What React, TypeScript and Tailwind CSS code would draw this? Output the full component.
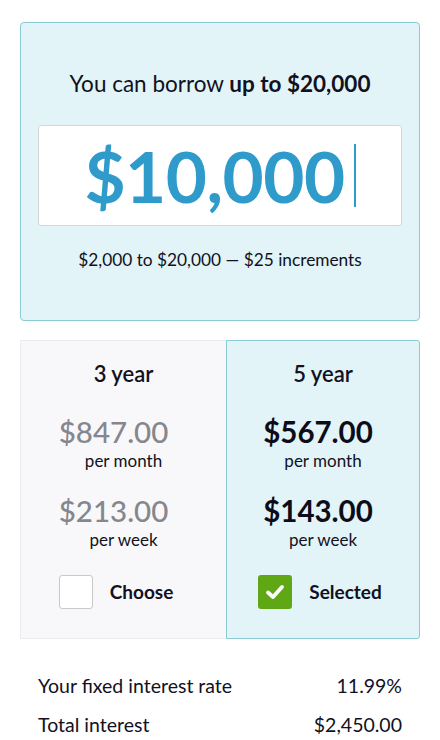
import React from "react";

const font = { fontFamily: "Lato, 'Open Sans', sans-serif" };

function Option({
  years,
  monthly,
  weekly,
  selected,
}: {
  years: string;
  monthly: string;
  weekly: string;
  selected?: boolean;
}) {
  const amount =
    "text-[29.5px] leading-[36px] " +
    (selected ? "font-bold text-[#0d0d1a] mr-[10px]" : "font-medium text-[#86868c] mr-[20px]");
  return (
    <div
      className={
        selected
          ? "flex-1 flex flex-col items-center bg-[#e2f4f7] border border-[#8ccbd3] rounded-r-[3px] pt-[18px] pb-[29px]"
          : "w-[206px] flex flex-col items-center bg-[#f8f8fa] border border-r-0 border-[#ececef] pt-[18px] pb-[29px]"
      }
    >
      <div className="text-[22px] font-semibold text-[#111122] leading-[30px]">{years}</div>
      <div className={"mt-[25px] " + amount}>{monthly}</div>
      <div className="text-[17px] text-[#111122] leading-[20px] mt-[1px]">per month</div>
      <div className={"mt-[22px] " + amount}>{weekly}</div>
      <div className="text-[17px] text-[#111122] leading-[20px] mt-[1px]">per week</div>
      <div
        className={
          "mt-[25px] flex items-center gap-[17px] " + (selected ? "mr-[6px]" : "mr-[15px]")
        }
      >
        {selected ? (
          <div className="w-[34px] h-[34px] rounded-[3px] bg-[#5fa714] flex items-center justify-center">
            <svg width="22" height="22" viewBox="0 0 22 22">
              <path
                d="M4 11.5 L9 16 L18 6"
                fill="none"
                stroke="white"
                strokeWidth="3.8"
                strokeLinecap="round"
                strokeLinejoin="round"
              />
            </svg>
          </div>
        ) : (
          <div className="w-[34px] h-[34px] rounded-[3px] bg-white border border-[#c8c8cc]" />
        )}
        <span className="text-[19px] font-bold text-[#111122]">
          {selected ? "Selected" : "Choose"}
        </span>
      </div>
    </div>
  );
}

export default function App() {
  return (
    <div className="w-[440px] h-[740px] bg-white overflow-hidden" style={font}>
      <div className="px-[20px] pt-[22px]">
        {/* Amount card */}
        <div className="bg-[#e2f4f7] border border-[#8ccbd3] rounded-[4px] px-[17px] pt-[46px] pb-[48px] flex flex-col items-center">
          <div className="text-[22.5px] text-[#111122] leading-[30px]">
            You can borrow <span className="font-bold">up to $20,000</span>
          </div>
          <div className="mt-[26px] w-full h-[101px] bg-white border border-[#d6d6d8] rounded-[3px] flex items-center justify-center">
            <span className="text-[71px] font-bold text-[#2e9bcb] leading-none tracking-[-0.5px]">
              $10,000
            </span>
            <span className="ml-[9px] w-[2px] h-[63px] bg-[#2e9bcb]" />
          </div>
          <div className="mt-[22px] text-[17.3px] text-[#111122] leading-[24px]">
            $2,000 to $20,000 — $25 increments
          </div>
        </div>

        {/* Term options */}
        <div className="mt-[19px] flex">
          <Option years="3 year" monthly="$847.00" weekly="$213.00" />
          <Option years="5 year" monthly="$567.00" weekly="$143.00" selected />
        </div>

        {/* Summary */}
        <div className="mt-[35px] px-[18px] flex flex-col gap-[15px] text-[19.5px] text-[#111122] leading-[24px]">
          <div className="flex justify-between">
            <span>Your fixed interest rate</span>
            <span>11.99%</span>
          </div>
          <div className="flex justify-between">
            <span>Total interest</span>
            <span>$2,450.00</span>
          </div>
        </div>
      </div>
    </div>
  );
}
